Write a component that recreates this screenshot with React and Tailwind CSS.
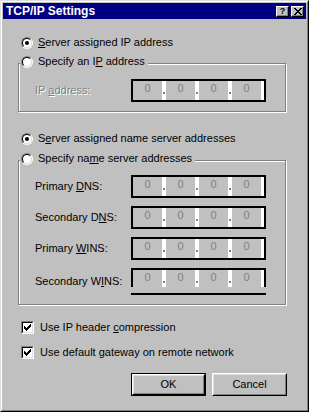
import React from 'react';

const FONT = "font-['Liberation_Sans',Arial,sans-serif]";

function Radio({ checked }) {
  return (
    <span className="w-3 h-3 shrink-0 rounded-full border border-t-[#808080] border-l-[#808080] border-b-white border-r-white">
      <span className="w-full h-full rounded-full border border-t-black border-l-black border-b-[#dfdfdf] border-r-[#dfdfdf] bg-white flex items-center justify-center">
        {checked ? <span className="w-1 h-1 rounded-full bg-black" /> : null}
      </span>
    </span>
  );
}

function Check() {
  return (
    <span className="w-[13px] h-[13px] shrink-0 border border-t-[#808080] border-l-[#808080] border-b-white border-r-white">
      <span className="w-full h-full border border-t-black border-l-black border-b-[#dfdfdf] border-r-[#dfdfdf] bg-white flex items-center justify-center">
        <svg width="7" height="7" viewBox="0 0 7 7" shapeRendering="crispEdges">
          <path d="M6 0h1v3h-1zM5 1h1v3h-1zM4 2h1v3h-1zM0 2h1v3h-1zM1 3h1v3h-1zM2 4h1v3h-1zM3 3h1v3h-1z" fill="#000" />
        </svg>
      </span>
    </span>
  );
}

function IpBox({ detached }) {
  return (
    <div className="flex flex-col">
      <div
        className={`w-[135px] border-2 border-black bg-white flex ${
          detached ? 'h-[19px] border-b-0' : 'h-[23px]'
        }`}
      >
        {[0, 1, 2, 3].map((i) => (
          <React.Fragment key={i}>
            <div className="w-[29px] h-full bg-[#c0c0c0] text-center text-[#808080] leading-[14px]">0</div>
            {i < 3 ? (
              <div className="w-1 pt-[11px] pl-px">
                <div className="w-[2px] h-[2px] bg-[#808080]" />
              </div>
            ) : null}
          </React.Fragment>
        ))}
      </div>
      {detached ? <div className="mt-[6px] w-[135px] h-[2px] bg-black" /> : null}
    </div>
  );
}

function Group({ caption, className, children }) {
  return (
    <div
      className={`relative ml-[15px] w-[268px] border border-[#808080] shadow-[inset_1px_1px_0_#fff,1px_1px_0_#fff] ${className}`}
    >
      <div className="absolute left-px top-[-12px] h-[19px] pl-px pr-[3px] flex items-center gap-[5px] bg-[#c0c0c0]">
        <Radio />
        <span>{caption}</span>
      </div>
      {children}
    </div>
  );
}

function Field({ label, disabled, detached }) {
  return (
    <div className="flex items-center">
      <span
        className={`w-[96px] pl-[16px] box-content ${
          disabled ? 'text-[#808080] [text-shadow:1px_1px_0_#fff]' : ''
        }`}
      >
        {label}
      </span>
      <div className={detached ? 'self-start' : ''}>
        <IpBox detached={detached} />
      </div>
    </div>
  );
}

function Button({ primary, children }) {
  return (
    <div className={`w-[75px] h-[23px] ${primary ? 'border border-black' : ''}`}>
      <div className="w-full h-full border border-t-white border-l-white border-b-black border-r-black">
        <div className="w-full h-full border border-t-[#dfdfdf] border-l-[#dfdfdf] border-b-[#808080] border-r-[#808080] flex items-center justify-center">
          {children}
        </div>
      </div>
    </div>
  );
}

export default function App() {
  return (
    <div className={`w-[309px] h-[412px] border border-t-[#dfdfdf] border-l-[#dfdfdf] border-b-black border-r-black bg-[#c0c0c0] text-[11px] leading-[13px] text-black ${FONT}`}>
      <div className="w-full h-full border border-t-white border-l-white border-b-[#808080] border-r-[#808080] p-px flex flex-col">
        <div className="h-[16px] bg-[#000080] flex items-center pl-[3px] pr-[2px]">
          <span className="text-white font-bold text-[12px] leading-[14px] flex-1">TCP/IP Settings</span>
          <div className="w-[13px] h-[11px] bg-[#c0c0c0] border border-t-white border-l-white border-b-black border-r-black shadow-[inset_-1px_-1px_0_#808080] flex items-center justify-center text-[9px] font-bold leading-none">
            ?
          </div>
          <div className="ml-[2px] w-[13px] h-[11px] bg-[#c0c0c0] border border-t-white border-l-white border-b-black border-r-black shadow-[inset_-1px_-1px_0_#808080] flex items-center justify-center">
            <svg width="8" height="7" viewBox="0 0 8 7" shapeRendering="crispEdges">
              <path d="M0 0h2v1h-2zM6 0h2v1h-2zM1 1h2v1h-2zM5 1h2v1h-2zM2 2h4v1h-4zM3 3h2v1h-2zM2 4h4v1h-4zM1 5h2v1h-2zM5 5h2v1h-2zM0 6h2v1h-2zM6 6h2v1h-2z" fill="#000" />
            </svg>
          </div>
        </div>

        <div className="flex flex-col">
          <div className="mt-[14px] ml-[18px] h-[19px] flex items-center gap-[5px]">
            <Radio checked />
            <span>
              <u>S</u>erver assigned IP address
            </span>
          </div>

          <Group
            className="mt-[11px] pt-[15px] pb-[9px]"
            caption={
              <>
                Specify an I<u>P</u> address
              </>
            }
          >
            <Field
              disabled
              label={
                <>
                  IP <u>a</u>ddress:
                </>
              }
            />
          </Group>

          <div className="mt-[17px] ml-[18px] h-[19px] flex items-center gap-[5px]">
            <Radio checked />
            <span>
              S<u>e</u>rver assigned name server addresses
            </span>
          </div>

          <Group
            className="mt-[12px] pt-[14px] pb-[9px] flex flex-col gap-[8px]"
            caption={
              <>
                Specify na<u>m</u>e server addresses
              </>
            }
          >
            <Field
              label={
                <>
                  Primary <u>D</u>NS:
                </>
              }
            />
            <Field
              label={
                <>
                  Secondary D<u>N</u>S:
                </>
              }
            />
            <Field
              label={
                <>
                  Primary <u>W</u>INS:
                </>
              }
            />
            <Field
              detached
              label={
                <>
                  Secondary W<u>I</u>NS:
                </>
              }
            />
          </Group>

          <div className="mt-[13px] ml-[18px] h-[19px] flex items-center gap-[6px]">
            <Check />
            <span>
              Use IP header <u>c</u>ompression
            </span>
          </div>
          <div className="mt-[6px] ml-[18px] h-[19px] flex items-center gap-[6px]">
            <Check />
            <span>
              Use default <u>g</u>ateway on remote network
            </span>
          </div>

          <div className="mt-[11px] pr-[19px] flex justify-end gap-[6px]">
            <Button primary>OK</Button>
            <Button>Cancel</Button>
          </div>
        </div>
      </div>
    </div>
  );
}
